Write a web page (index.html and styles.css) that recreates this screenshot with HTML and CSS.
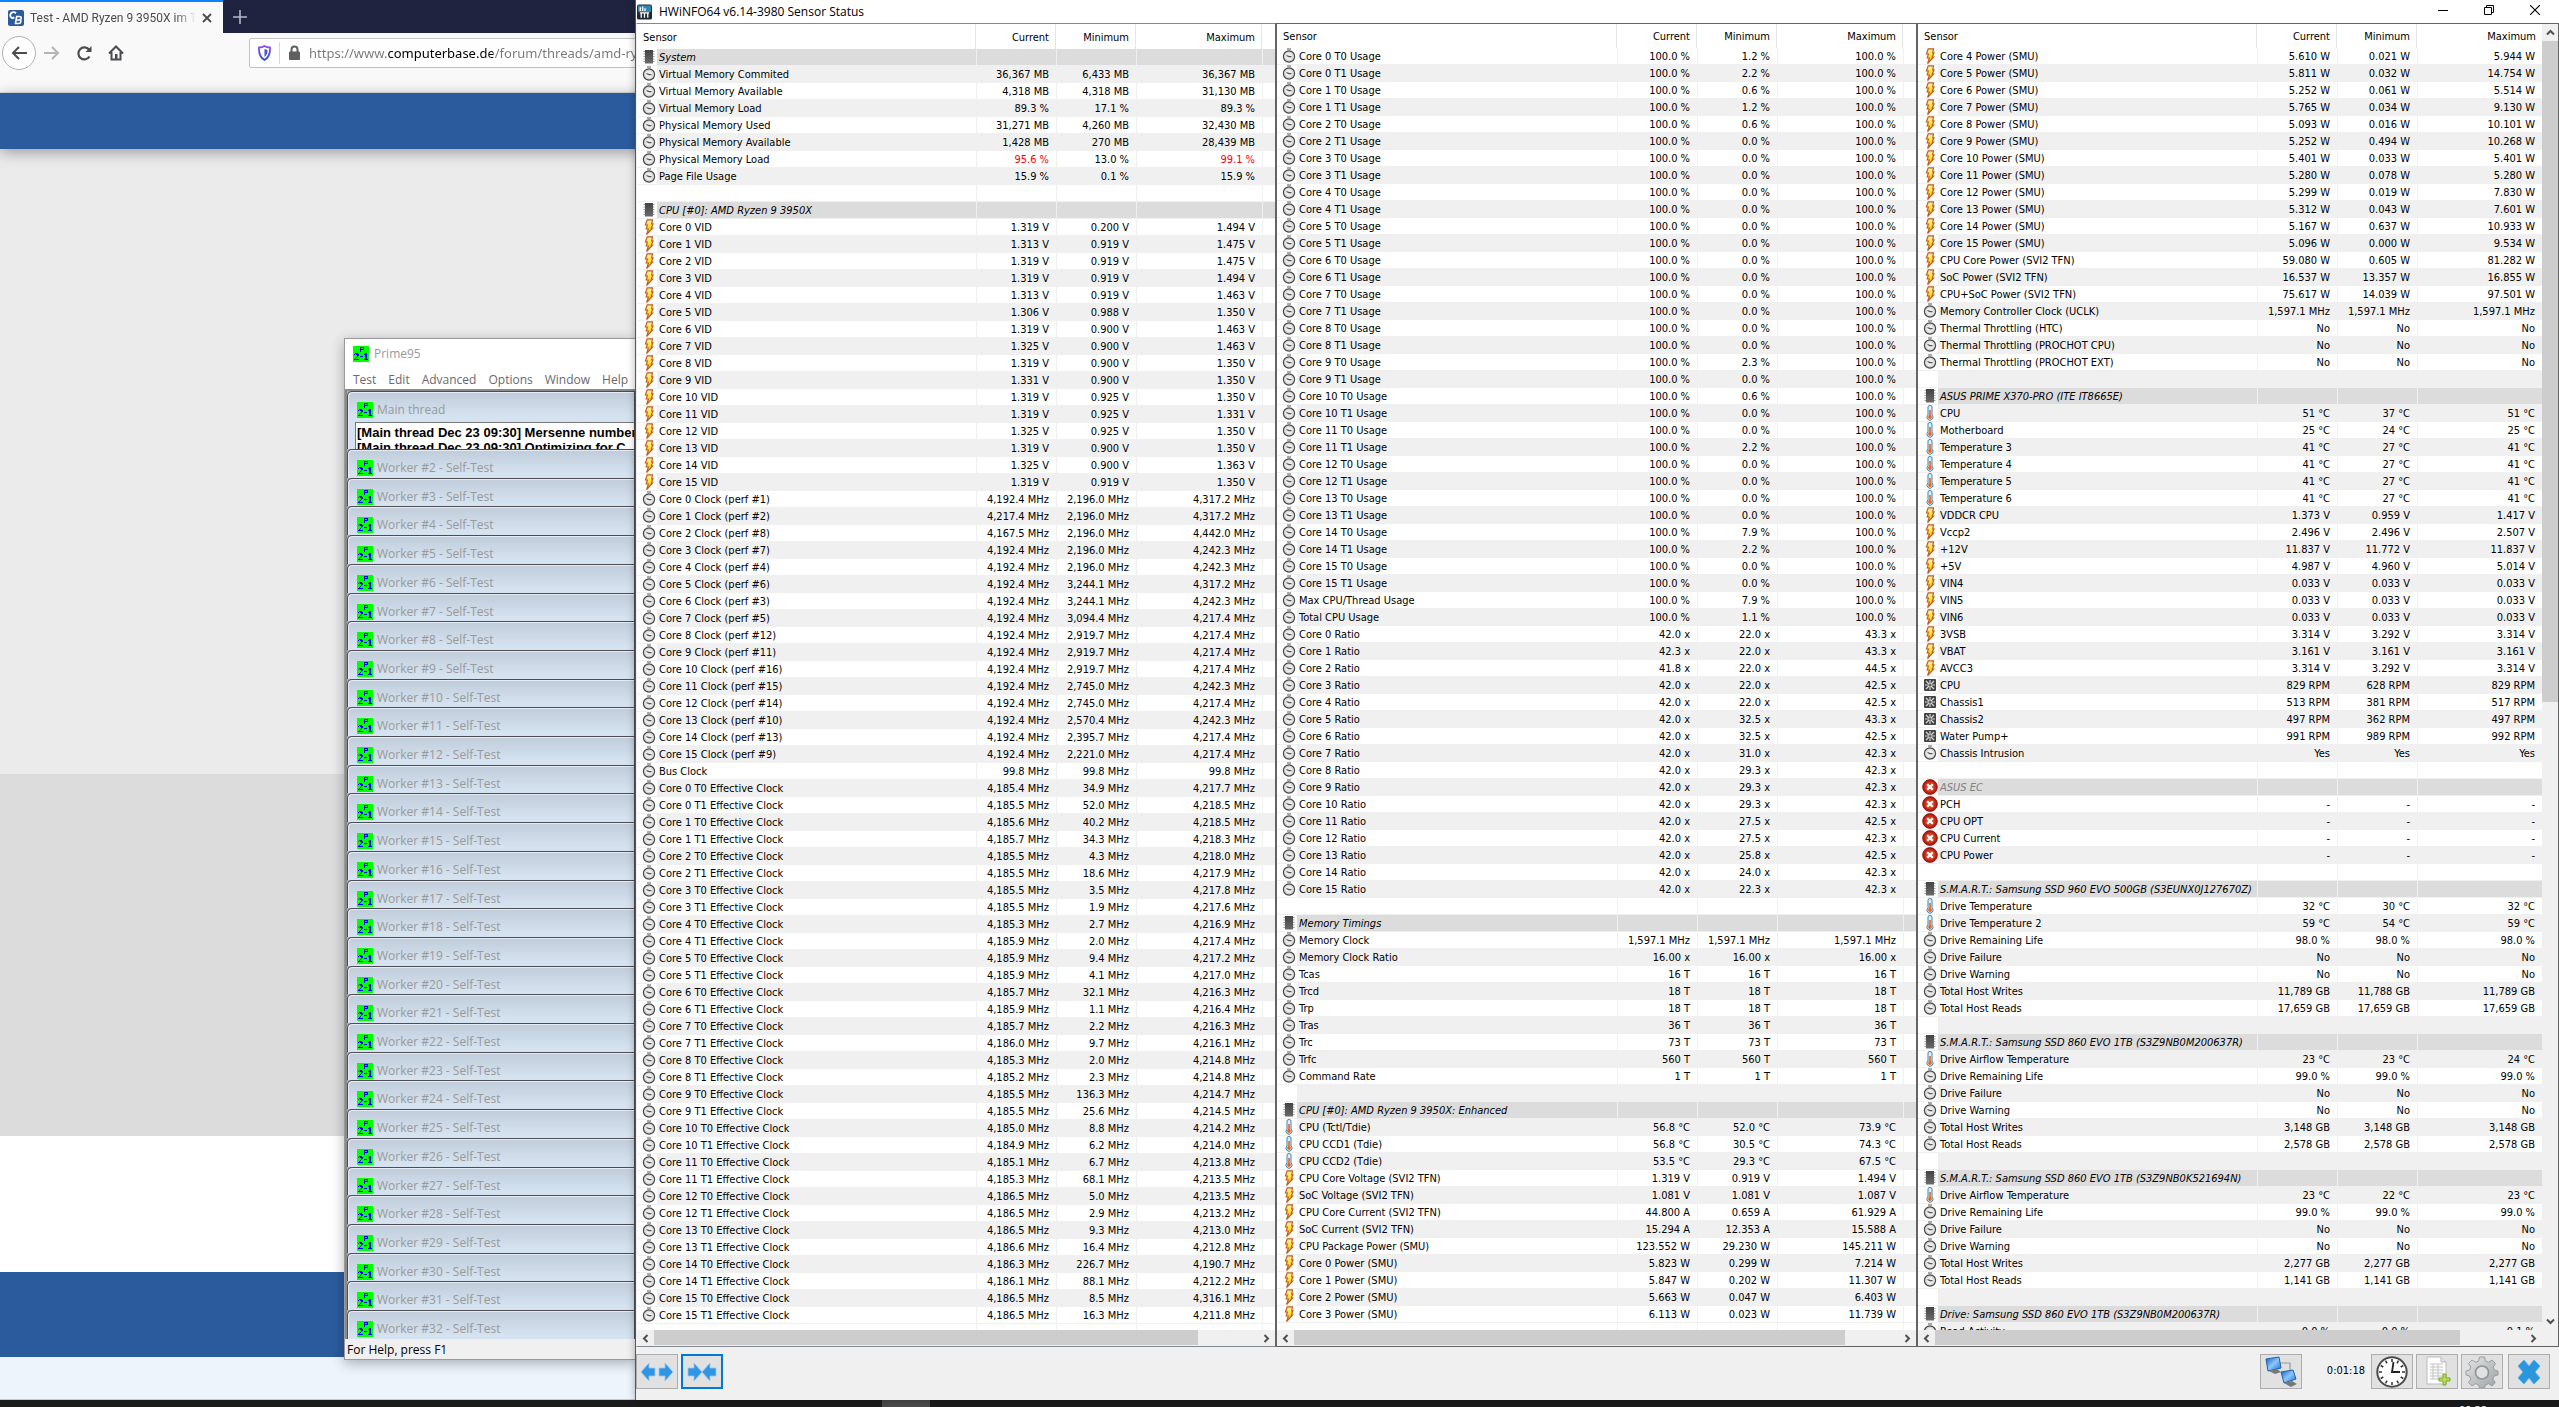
FILE: index.html
```html
<!DOCTYPE html>
<html lang="en">
<head>
<meta charset="utf-8">
<title>Sensor Status</title>
<link rel="stylesheet" href="styles.css">
</head>
<body>
<svg class="sprite" aria-hidden="true">
  <defs>
    <linearGradient id="g-bolt" x1="0" y1="0" x2="0" y2="1"><stop offset="0" stop-color="#fff0c0"/><stop offset=".5" stop-color="#ffe01e"/><stop offset="1" stop-color="#ffc800"/></linearGradient>
    <linearGradient id="g-chip" x1="0" y1="0" x2="0" y2="1"><stop offset="0" stop-color="#444"/><stop offset="1" stop-color="#6a6a6a"/></linearGradient>
    <linearGradient id="g-blue" x1="0" y1="0" x2="1" y2="1"><stop offset="0" stop-color="#0d5cc0"/><stop offset=".5" stop-color="#8fc6f7"/><stop offset="1" stop-color="#0b6fd6"/></linearGradient>
    <radialGradient id="g-red"><stop offset="0" stop-color="#f2703c"/><stop offset=".6" stop-color="#cf3a1c"/><stop offset="1" stop-color="#a50d0d"/></radialGradient>
    <linearGradient id="g-gear" x1="0" y1="0" x2="1" y2="1"><stop offset="0" stop-color="#e4e7e8"/><stop offset="1" stop-color="#9ca1a3"/></linearGradient>
    <linearGradient id="g-shield" x1="0" y1="0" x2="0" y2="1"><stop offset="0" stop-color="#8b4ff0"/><stop offset="1" stop-color="#2a4fd8"/></linearGradient>
  </defs>
  <symbol id="clock" viewBox="0 0 16 16"><rect x="6" y="0" width="4" height="2" fill="#aaa"/><circle cx="8" cy="8.500" r="5.500" fill="#ececec" stroke="#4c4c4c" stroke-width="1.400"/><circle cx="8" cy="8.500" r="4.300" fill="none" stroke="#cfcfcf"/><path d="M5.500 7.600L8 8.600H10.500" fill="none" stroke="#555" stroke-width="1.100"/></symbol>
  <symbol id="bolt" viewBox="0 0 16 16"><path d="M6.200 .8H11.500L10.700 4.800H12L10.300 9H11.600L5.600 15.500L7.400 10H5.200L6.400 6H4.400Z" fill="url(#g-bolt)" stroke="#c05f20" stroke-width="1.200"/></symbol>
  <symbol id="chip" viewBox="0 0 16 16"><path d="M2.500 2.500h11M2.500 5h11M2.500 7.500h11M2.500 10h11M2.500 12.500h11" stroke="#9a9a9a" stroke-width="1.200"/><rect x="4" y="1" width="8" height="13.500" fill="url(#g-chip)"/></symbol>
  <symbol id="temp" viewBox="0 0 16 16"><path d="M6 2a2 1.500 0 0 1 4 0V10a3 3 0 1 1-4 0Z" fill="#dff0fb" stroke="#3f83b0"/><path d="M8 5v7" stroke="#e8641b" stroke-width="1.600"/><circle cx="8" cy="12" r="1.900" fill="#f06418"/></symbol>
  <symbol id="fan" viewBox="0 0 16 16"><rect x="2" y="2" width="12" height="12" rx="1" fill="#444"/><path d="M8 3v10M3 8h10M4 4l8 8M12 4l-8 8" stroke="#d8d8d8" stroke-width="1.200"/><circle cx="8" cy="8" r="1.500" fill="#666"/></symbol>
  <symbol id="off" viewBox="0 0 16 16"><circle cx="8" cy="8" r="7.400" fill="url(#g-red)" stroke="#8e1111" stroke-width=".8"/><path d="M5.200 5.200l5.600 5.600M10.800 5.200l-5.600 5.600" stroke="#fff" stroke-width="2.200"/></symbol>
  <symbol id="prime" viewBox="0 0 16 16" shape-rendering="crispEdges"><rect width="16" height="16" fill="#0f0"/><path d="M7 1h4v3H8v2H7zM8 2v1h2V2zM2 7h3v1h1v2H5v1H4v1H3v1h3v1H1v-1h1v-1h1v-1h1V9H3V8H2v1H1V8h1zM7 10h3v1H7zM12 7h2v6h1v1h-4v-1h1V9h-1V8h1z" fill="#00f" fill-rule="evenodd"/></symbol>
</svg>

<div class="desktop">
  <section class="browser" aria-label="Browser">
    <header class="tabs">
      <div class="tab">
        <svg class="favicon" viewBox="0 0 16 16"><rect width="16" height="16" rx="2" fill="#2b5b9d"/><path d="M8 3.200C5.500 1 2.300 2.500 2.200 5.200C2.200 8 4.800 8.600 6.300 7.300" fill="none" stroke="#fff" stroke-width="1.900"/><path d="M8.700 6.500L7.500 13.500H10.500C13.500 13.500 13.500 10.300 11.500 10C14 9.600 13.800 6.500 11.500 6.500ZM9 10H11.500" fill="none" stroke="#fff" stroke-width="1.600"/></svg>
        <span class="tab-title">Test - AMD Ryzen 9 3950X im Te</span>
        <button class="icon-btn" aria-label="Close tab"><svg width="10" height="10" viewBox="0 0 10 10"><path d="M1 1l8 8M9 1l-8 8" stroke="#4a4a4c" stroke-width="1.800"/></svg></button>
      </div>
      <button class="icon-btn new-tab" aria-label="New tab"><svg width="14" height="14" viewBox="0 0 14 14"><path d="M7 0v14M0 7h14" stroke="#b7b7c3" stroke-width="1.600"/></svg></button>
    </header>
    <nav class="toolbar">
      <button class="icon-btn back" aria-label="Back"><svg width="16" height="16" viewBox="0 0 16 16"><path d="M16 8H2M8 2L2 8l6 6" fill="none" stroke="#4c4c4f" stroke-width="2"/></svg></button>
      <button class="icon-btn" aria-label="Forward"><svg width="16" height="16" viewBox="0 0 16 16"><path d="M0 8h14M8 2l6 6-6 6" fill="none" stroke="#b4b4b6" stroke-width="2"/></svg></button>
      <button class="icon-btn" aria-label="Reload"><svg width="16" height="16" viewBox="0 0 16 16"><path d="M13.500 11.500A6 6 0 1 1 13 4.500" fill="none" stroke="#4c4c4f" stroke-width="2.200"/><path d="M15.500 1v6h-6z" fill="#4c4c4f"/></svg></button>
      <button class="icon-btn" aria-label="Home"><svg width="16" height="16" viewBox="0 0 16 16"><path d="M1 8.500L8 1.500l7 7M3.500 7v7.500h9V7" fill="none" stroke="#4c4c4f" stroke-width="2"/><path d="M7 9h2.500v5H7z" fill="#4c4c4f"/></svg></button>
      <div class="urlbar">
        <svg width="13" height="16" viewBox="0 0 13 16"><path d="M1 2.500C3 2.500 5 2 6.500 1C8 2 10 2.500 12 2.500C12.300 8 11 12.500 6.500 15C2 12.500.7 8 1 2.500Z" fill="none" stroke="url(#g-shield)" stroke-width="1.800"/><path d="M6.500 4c1 .5 2 .8 3 .9C9.500 8 8.500 10.500 6.500 12Z" fill="#4a4fe0"/></svg>
        <span class="sep"></span>
        <svg width="13" height="16" viewBox="0 0 13 16"><path d="M3.500 7V4.500a3 3 0 0 1 6 0V7" fill="none" stroke="#5f5f61" stroke-width="2"/><rect x="1" y="6.500" width="11" height="8.500" rx="1" fill="#5f5f61"/></svg>
        <input class="url" type="text" aria-label="Address" value="https://www.computerbase.de/forum/threads/amd-ry">
      </div>
    </nav>
    <main class="site">
      <div class="site-top"></div>
      <div class="site-body"></div>
      <div class="site-mid"></div>
      <div class="site-white"></div>
      <div class="site-blue"></div>
      <div class="site-foot"></div>
    </main>
  </section>

  <section class="prime" aria-label="Prime95">
    <header class="prime-title"><svg class="ico"><use href="#prime"/></svg><span>Prime95</span></header>
    <nav class="menu">
      <button>Test</button><button>Edit</button><button>Advanced</button><button>Options</button><button>Window</button><button>Help</button>
    </nav>
    <div class="mdi">
      <article class="child main-thread">
        <header><svg class="ico"><use href="#prime"/></svg><span>Main thread</span></header>
        <div class="log">[Main thread Dec 23 09:30] Mersenne number<br>[Main thread Dec 23 09:30] Optimizing for C</div>
      </article>
      <div class="workers" id="workers"></div>
    </div>
    <footer class="status">For Help, press F1</footer>
  </section>

  <section class="hwinfo" aria-label="Sensor Status">
    <header class="hw-title">
      <svg class="hw-logo" viewBox="0 0 16 16"><rect width="16" height="16" rx="2" fill="#1c2833"/><rect x="1" y="1" width="14" height="7" fill="#2f86b5"/><path d="M3.500 3v4M6 2v5M8.500 4v3M4.500 9v5M8 9v5M11.500 9v5M3 9h10" stroke="#fff" stroke-width="1.400"/></svg>
      <h1>HWiNFO64 v6.14-3980 Sensor Status</h1>
      <div class="caption">
        <button class="icon-btn" aria-label="Minimize"><svg width="10" height="10" viewBox="0 0 10 10"><path d="M0 5.500h10" stroke="#000"/></svg></button>
        <button class="icon-btn" aria-label="Restore"><svg width="10" height="10" viewBox="0 0 10 10"><path d="M.5 2.500h7v7h-7zM2.500 2.500v-2h7v7h-2" fill="none" stroke="#000"/></svg></button>
        <button class="icon-btn" aria-label="Close"><svg width="10" height="10" viewBox="0 0 10 10"><path d="M0 0l10 10M10 0L0 10" stroke="#000" stroke-width="1.100"/></svg></button>
      </div>
    </header>
    <div class="panels" id="panels"></div>
    <footer class="tools">
      <button class="tool" aria-label="Expand"><svg width="34" height="22" viewBox="0 0 34 22"><path d="M1 11l8-9v5h6v8H9v5zM33 11l-8-9v5h-6v8h6v5z" fill="#2f95e6" stroke="#9cc7ea" stroke-width=".8"/></svg></button>
      <button class="tool active" aria-label="Shrink"><svg width="32" height="22" viewBox="0 0 32 22"><path d="M16 11L8 2v5H2v8h6v5zM16 11l8-9v5h6v8h-6v5z" fill="#2f95e6" stroke="#9cc7ea" stroke-width=".8"/></svg></button>
      <span class="spring"></span>
      <button class="tool" aria-label="Network"><svg width="34" height="32" viewBox="0 0 34 32"><path d="M16 7h10v8" fill="none" stroke="#999" stroke-width="1.200"/><path d="M2 3l13-2 2 11-13 3z" fill="url(#g-blue)" stroke="#1c62b0"/><path d="M5 15l6 3 6-2-4-3z" fill="#777"/><path d="M17 16l12-2 3 9-12 4z" fill="url(#g-blue)" stroke="#1c62b0"/><path d="M20 27l7 4 6-3-5-3z" fill="#777"/></svg></button>
      <span class="uptime">0:01:18</span>
      <button class="tool" aria-label="Clock"><svg width="34" height="32" viewBox="0 0 34 32"><circle cx="17" cy="16" r="14.700" fill="#fff" stroke="#4a4a4a" stroke-width="2"/><path d="M17 3v3M17 26v3M4 16h3M27 16h3M10.500 4.700l1.500 2.600M22 24.700l1.500 2.600M5.700 9.500l2.600 1.500M25.700 21l2.600 1.500M5.700 22.500l2.600-1.500M25.700 11l2.600-1.500M10.500 27.300l1.500-2.600M22 7.300l1.500-2.600" stroke="#333" stroke-width="1.500"/><path d="M18.500 6L17 16h8" fill="none" stroke="#222" stroke-width="1.800"/></svg></button>
      <button class="tool" aria-label="Report"><svg width="34" height="32" viewBox="0 0 34 32"><path d="M7 1h14l5 5v22H7z" fill="#fcfcfc" stroke="#bbb"/><path d="M21 1v5h5" fill="#e6e6e6" stroke="#bbb"/><path d="M10 8h13M10 11h13M10 14h13M10 17h13M10 20h13M10 23h13M13 8v15M18 8v15" stroke="#c4c4c4"/><path d="M23 18h3v4h4v3h-4v4h-3v-4h-4v-3h4z" fill="#b5dc5a" stroke="#7da52a"/></svg></button>
      <button class="tool" aria-label="Settings"><svg width="34" height="32" viewBox="0 0 34 32"><path d="M14.500 1h5l1 4 3 1.300L27 4l3.500 3.500-2.300 3.600 1.300 3L33 15v4l-3.800 1-1.200 3 2.200 3.500L27 30l-3.500-2.300-3 1.300-1 3h-5l-1-3-3-1.300L7 30l-3.500-3.500L5.800 23l-1.300-3L1 19v-4l3.600-1 1.200-3-2.300-3.500L7 4l3.500 2.300 3-1.300z" fill="url(#g-gear)" stroke="#9a9d9e"/><circle cx="17" cy="16.500" r="6.500" fill="#e1e1e1" stroke="#8f9394" stroke-width="1.600"/></svg></button>
      <button class="tool" aria-label="Close sensors"><svg width="24" height="26" viewBox="0 0 24 26"><path d="M7 1l5 6 5-6 6 6-5 6 5 6-6 6-5-6-5 6-6-6 5-6-5-6z" fill="#2b96dc" stroke="#58b2ea"/></svg></button>
    </footer>
  </section>

  <footer class="taskbar"><span class="running"></span><time class="time">09:32</time></footer>
</div>
<script src="script.js"></script>
</body>
</html>
```
FILE: styles.css
```css
* { box-sizing: border-box; }
body { margin: 0; font: 12px/16px "Open Sans", "Noto Sans", sans-serif; color: #000; }
button, input { font: inherit; color: inherit; border: 0; margin: 0; padding: 0; background: none; }
svg { display: block; flex: none; }
.sprite { position: absolute; width: 0; height: 0; }
.ico { width: 16px; height: 16px; }
.icon-btn { display: flex; align-items: center; justify-content: center; }

.desktop { position: relative; height: 100vh; overflow: hidden; display: flex; flex-direction: column; }

/* browser */
.browser { flex: 1; min-height: 0; display: flex; flex-direction: column; }
.tabs { height: 33px; flex: none; display: flex; background: #20233f; }
.tab { width: 223px; display: flex; align-items: center; gap: 6px; padding: 0 11px 0 8px; background: #f9f9fa; border-top: 2px solid #0a84ff; color: #4c4c50; }
.favicon { width: 16px; height: 16px; }
.tab-title { flex: 1; overflow: hidden; font-family: Roboto, "Open Sans", sans-serif; white-space: nowrap; -webkit-mask-image: linear-gradient(90deg, #000 88%, transparent); mask-image: linear-gradient(90deg, #000 88%, transparent); }
.new-tab { width: 34px; }
.toolbar { height: 60px; flex: none; display: flex; align-items: center; gap: 16px; padding: 0 0 19px 2px; background: #f9f9fa; border-bottom: 1px solid #e0e0e1; }
.back { width: 34px; height: 34px; border: 1px solid #b1b1b3; border-radius: 50%; background: #fff; margin-right: -8px; }
.urlbar { flex: 1; height: 30px; margin-left: 109px; display: flex; align-items: center; gap: 8px; padding-left: 8px; background: #fff; border: 1px solid #c3c3c5; border-radius: 2px; }
.sep { width: 1px; height: 22px; background: #d7d7db; }
.url { flex: 1; font: 13px/20px "Noto Sans", "Open Sans", sans-serif; color: transparent; background: linear-gradient(90deg, #777 78px, #000 78px 184px, #777 184px); -webkit-background-clip: text; background-clip: text; }
.site { flex: 1; min-height: 0; display: flex; flex-direction: column; background: #ebebeb; }
.site-top { flex: 0 0 56px; background: #2b5b9d; box-shadow: 0 3px 14px rgba(0,0,0,.35); }
.site-body { flex: 1; }
.site-mid { flex: 0 0 362px; background: #dcdcdc; }
.site-white { flex: 0 0 136px; background: #fff; }
.site-blue { flex: 0 0 85px; background: #2b5b9d; }
.site-foot { flex: 0 0 43px; background: #edf4fc; border-bottom: 1px solid #c8c8c8; }

/* Prime95 */
.prime { position: absolute; left: 344px; top: 338px; bottom: 47px; width: 292px; display: flex; flex-direction: column; overflow: hidden; background: #fff; border: 1px solid #999; box-shadow: 0 3px 12px rgba(0,0,0,.3); color: #999; }
.prime-title { display: flex; align-items: center; gap: 5px; padding: 6px 8px; height: 30px; }
.menu { display: flex; gap: 12px; padding: 2px 8px 0; height: 20px; color: #6a6a6a; }
.mdi { flex: 1; min-height: 0; overflow: hidden; display: flex; flex-direction: column; background: #ababab; border-top: 2px solid #8a8a8a; border-left: 2px solid #8a8a8a; }
.child { background: linear-gradient(#c0ccda, #d5e2ef 24px); border: 1px solid #4e4e52; border-top-left-radius: 5px; box-shadow: inset 1px 1px #e4ecf5; overflow: hidden; }
.child header { display: flex; align-items: center; gap: 4px; padding: 10px 9px 4px; }
.child header span { white-space: nowrap; }
.main-thread { flex: 0 0 58px; border-bottom: 0; }
.log { margin-left: 7px; padding: 2px 0 0 1px; border-top: 1px solid #777; border-left: 1px solid #777; background: #fff; color: #000; font: bold 13px/15px "Liberation Sans", sans-serif; white-space: nowrap; overflow: hidden; }
.workers { flex: 1; min-height: 0; display: flex; flex-direction: column; }
.workers .child { flex: 1; min-height: 0; border-bottom: 0; }
.status { flex: none; height: 20px; padding: 3px 2px 0; background: #f0f0f0; color: #000; }

/* HWiNFO */
.hwinfo { position: absolute; left: 635px; right: 0; top: 0; bottom: 7px; display: flex; flex-direction: column; background: #f0f0f0; border-left: 1px solid #55565c; box-shadow: 0 0 8px rgba(0,0,0,.3); }
.hw-title { flex: none; height: 23px; display: flex; align-items: center; gap: 7px; padding-left: 1px; background: #fff; }
.hw-logo { width: 15px; height: 16px; }
.hw-title h1 { flex: 1; margin: 0; font-size: 12px; font-weight: 400; }
.caption { display: flex; align-self: flex-start; padding: 5px 19px 0 0; gap: 36px; }
.panels { flex: 1; min-height: 0; display: grid; grid-template-columns: 640fr 641fr 642fr; grid-template-rows: 100%; font: 11px/14px "DejaVu Sans Condensed", "Liberation Sans", sans-serif; }
.panel { min-width: 0; display: flex; background: #fff; border: 1px solid #646468; }
.panel:first-child { border-color: #828790 #646468 #828790 #f0f0f0; }
.view { flex: 1; min-width: 0; display: flex; flex-direction: column; }
.clip { flex: 1; min-height: 0; overflow: hidden; }
.sensors { width: 100%; table-layout: fixed; border-collapse: separate; border-spacing: 0; }
.c-val { width: 80px; }
.c-max { width: 126px; }
.c-pad { width: 13px; }
.panel:last-child .c-max { width: 125px; }
.sensors th { font-weight: 400; text-align: right; }
.sensors td, .sensors th { padding: 2px 7px 0 0; white-space: nowrap; overflow: hidden; height: 17px; }
.sensors thead th { height: 24px; border-right: 1px solid #e5e5e5; padding-right: 6px; }
.panel:first-child thead th { height: 25px; }
.sensors thead th:first-child { text-align: left; padding-left: 6px; }
.sensors thead th:last-child { border-right: 0; }
.sensors td { text-align: right; border-left: 1px solid #f0f0f0; border-bottom: 1px solid #f0f0f0; }
.sensors tbody th { text-align: left; border-bottom: 1px solid #f0f0f0; padding: 0; }
.sensors tbody tr:nth-child(even) { background: #f0f0f0; }
.sensors tbody tr.group { background: #dcdcdc; font-style: italic; }
.sensors tbody tr.tail { background: #fff; }
.cell { display: flex; height: 16px; }
.cell i { width: 20px; padding-left: 6px; flex: none; background: #fff; }
.cell svg { width: 16px; height: 16px; margin-left: -2px; }
.cell span { padding: 2px 0 0 2px; }
.hot { color: #f00; }
.gone span { color: #808080; }

/* scroll bars */
.hbar { flex: none; height: 16px; display: flex; background: #f0f0f0; }
.hbar button { flex: none; width: 17px; height: 16px; display: flex; align-items: center; justify-content: center; }
.track { flex: 1; }
.thumb { height: 15px; background: #cdcdcd; }
.vbar { flex: none; width: 16px; display: flex; flex-direction: column; background: #f0f0f0; padding-bottom: 16px; }
.vbar button { flex: none; width: 16px; height: 17px; display: flex; align-items: center; justify-content: center; }
.vbar .thumb { height: 52%; }

.tools { flex: none; height: 53px; display: flex; align-items: flex-start; padding: 7px 9px 0 0; }
.tool { width: 42px; height: 35px; display: flex; align-items: center; justify-content: center; background: #e1e1e1; border: 1px solid #adadad; margin-right: 3px; }
.tool.active { border: 2px solid #0078d7; }
.tool:last-child { margin: 0 0 0 2px; }
.spring { flex: 1; }
.uptime { width: 66px; padding: 9px 6px 0 0; text-align: right; font: 11px/16px "DejaVu Sans Condensed", "Liberation Sans", sans-serif; }

.taskbar { flex: none; height: 7px; overflow: hidden; display: flex; background: #1b1b1b; color: #fff; }
.running { width: 48px; margin-left: 882px; background: #4a4a4a; }
.time { margin-left: auto; margin-right: 72px; font: 11px/19px "Open Sans", sans-serif; }
```
FILE: script.js
```js
// Each panel is a list of lines: "icon|name|current|minimum|maximum".
// "# name" starts a sensor group; "" is a spacer row.
const pair = (list, name, unit) => list.map((v, i) => {
  const [cur, min, max] = v.split(' ');
  return `clock|Core ${i >> 1} T${i % 2} ${name}|${cur} ${unit}|${min} ${unit}|${max} ${unit}`;
});
const core = (icon, list, name, unit, from = 0) => list.map((v, i) => {
  const [cur, min, max] = v.split(' ');
  return `${icon}|Core ${i + from} ${name}|${cur} ${unit}|${min} ${unit}|${max} ${unit}`;
});

const perf = [1, 2, 8, 7, 4, 6, 3, 5, 12, 11, 16, 15, 14, 10, 13, 9];
const panel1 = [
  '# System',
  'clock|Virtual Memory Commited|36,367 MB|6,433 MB|36,367 MB',
  'clock|Virtual Memory Available|4,318 MB|4,318 MB|31,130 MB',
  'clock|Virtual Memory Load|89.3 %|17.1 %|89.3 %',
  'clock|Physical Memory Used|31,271 MB|4,260 MB|32,430 MB',
  'clock|Physical Memory Available|1,428 MB|270 MB|28,439 MB',
  'clock|Physical Memory Load|!95.6 %|13.0 %|!99.1 %',
  'clock|Page File Usage|15.9 %|0.1 %|15.9 %',
  '',
  '# CPU [#0]: AMD Ryzen 9 3950X',
  ...core('bolt', ['1.319 0.200 1.494', '1.313 0.919 1.475', '1.319 0.919 1.475', '1.319 0.919 1.494', '1.313 0.919 1.463', '1.306 0.988 1.350', '1.319 0.900 1.463', '1.325 0.900 1.463', '1.319 0.900 1.350', '1.331 0.900 1.350', '1.319 0.925 1.350', '1.319 0.925 1.331', '1.325 0.925 1.350', '1.319 0.900 1.350', '1.325 0.900 1.363', '1.319 0.919 1.350'], 'VID', 'V'),
  ...core('clock', ['4,192.4 2,196.0 4,317.2', '4,217.4 2,196.0 4,317.2', '4,167.5 2,196.0 4,442.0', '4,192.4 2,196.0 4,242.3', '4,192.4 2,196.0 4,242.3', '4,192.4 3,244.1 4,317.2', '4,192.4 3,244.1 4,242.3', '4,192.4 3,094.4 4,217.4', '4,192.4 2,919.7 4,217.4', '4,192.4 2,919.7 4,217.4', '4,192.4 2,919.7 4,217.4', '4,192.4 2,745.0 4,242.3', '4,192.4 2,745.0 4,217.4', '4,192.4 2,570.4 4,242.3', '4,192.4 2,395.7 4,217.4', '4,192.4 2,221.0 4,217.4'], 'Clock', 'MHz').map((l, i) => l.replace('Clock', `Clock (perf #${perf[i]})`)),
  'clock|Bus Clock|99.8 MHz|99.8 MHz|99.8 MHz',
  ...pair(['4,185.4 34.9 4,217.7', '4,185.5 52.0 4,218.5', '4,185.6 40.2 4,218.5', '4,185.7 34.3 4,218.3', '4,185.5 4.3 4,218.0', '4,185.5 18.6 4,217.9', '4,185.5 3.5 4,217.8', '4,185.5 1.9 4,217.6', '4,185.3 2.7 4,216.9', '4,185.9 2.0 4,217.4', '4,185.9 9.4 4,217.2', '4,185.9 4.1 4,217.0', '4,185.7 32.1 4,216.3', '4,185.9 1.1 4,216.4', '4,185.7 2.2 4,216.3', '4,186.0 9.7 4,216.1', '4,185.3 2.0 4,214.8', '4,185.2 2.3 4,214.8', '4,185.5 136.3 4,214.7', '4,185.5 25.6 4,214.5', '4,185.0 8.8 4,214.2', '4,184.9 6.2 4,214.0', '4,185.1 6.7 4,213.8', '4,185.3 68.1 4,213.5', '4,186.5 5.0 4,213.5', '4,186.5 2.9 4,213.2', '4,186.5 9.3 4,213.0', '4,186.6 16.4 4,212.8', '4,186.3 226.7 4,190.7', '4,186.1 88.1 4,212.2', '4,186.5 8.5 4,316.1', '4,186.5 16.3 4,211.8'], 'Effective Clock', 'MHz'),
  '~',
];

const usageMin = ['1.2', '2.2', '0.6', '1.2', '0.6', '0.0', '0.0', '0.0', '0.0', '0.0', '0.0', '0.0', '0.0', '0.0', '0.0', '0.0', '0.0', '0.0', '2.3', '0.0', '0.6', '0.0', '0.0', '2.2', '0.0', '0.0', '0.0', '0.0', '7.9', '2.2', '0.0', '0.0'];
const timing = (name, v) => `clock|${name}|${v}|${v}|${v}`;
const panel2 = [
  ...pair(usageMin.map(m => `100.0 ${m} 100.0`), 'Usage', '%'),
  'clock|Max CPU/Thread Usage|100.0 %|7.9 %|100.0 %',
  'clock|Total CPU Usage|100.0 %|1.1 %|100.0 %',
  ...core('clock', ['42.0 22.0 43.3', '42.3 22.0 43.3', '41.8 22.0 44.5', '42.0 22.0 42.5', '42.0 22.0 42.5', '42.0 32.5 43.3', '42.0 32.5 42.5', '42.0 31.0 42.3', '42.0 29.3 42.3', '42.0 29.3 42.3', '42.0 29.3 42.3', '42.0 27.5 42.5', '42.0 27.5 42.3', '42.0 25.8 42.5', '42.0 24.0 42.3', '42.0 22.3 42.3'], 'Ratio', 'x'),
  '',
  '# Memory Timings',
  timing('Memory Clock', '1,597.1 MHz'), timing('Memory Clock Ratio', '16.00 x'),
  timing('Tcas', '16 T'), timing('Trcd', '18 T'), timing('Trp', '18 T'), timing('Tras', '36 T'),
  timing('Trc', '73 T'), timing('Trfc', '560 T'), timing('Command Rate', '1 T'),
  '',
  '# CPU [#0]: AMD Ryzen 9 3950X: Enhanced',
  'temp|CPU (Tctl/Tdie)|56.8 °C|52.0 °C|73.9 °C',
  'temp|CPU CCD1 (Tdie)|56.8 °C|30.5 °C|74.3 °C',
  'temp|CPU CCD2 (Tdie)|53.5 °C|29.3 °C|67.5 °C',
  'bolt|CPU Core Voltage (SVI2 TFN)|1.319 V|0.919 V|1.494 V',
  'bolt|SoC Voltage (SVI2 TFN)|1.081 V|1.081 V|1.087 V',
  'bolt|CPU Core Current (SVI2 TFN)|44.800 A|0.659 A|61.929 A',
  'bolt|SoC Current (SVI2 TFN)|15.294 A|12.353 A|15.588 A',
  'bolt|CPU Package Power (SMU)|123.552 W|29.230 W|145.211 W',
  ...core('bolt', ['5.823 0.299 7.214', '5.847 0.202 11.307', '5.663 0.047 6.403', '6.113 0.023 11.739'], 'Power (SMU)', 'W'),
  '~',
];

const panel3 = [
  ...core('bolt', ['5.610 0.021 5.944', '5.811 0.032 14.754', '5.252 0.061 5.514', '5.765 0.034 9.130', '5.093 0.016 10.101', '5.252 0.494 10.268', '5.401 0.033 5.401', '5.280 0.078 5.280', '5.299 0.019 7.830', '5.312 0.043 7.601', '5.167 0.637 10.933', '5.096 0.000 9.534'], 'Power (SMU)', 'W', 4),
  'bolt|CPU Core Power (SVI2 TFN)|59.080 W|0.605 W|81.282 W',
  'bolt|SoC Power (SVI2 TFN)|16.537 W|13.357 W|16.855 W',
  'bolt|CPU+SoC Power (SVI2 TFN)|75.617 W|14.039 W|97.501 W',
  timing('Memory Controller Clock (UCLK)', '1,597.1 MHz'),
  timing('Thermal Throttling (HTC)', 'No'),
  timing('Thermal Throttling (PROCHOT CPU)', 'No'),
  timing('Thermal Throttling (PROCHOT EXT)', 'No'),
  '',
  '# ASUS PRIME X370-PRO (ITE IT8665E)',
  'temp|CPU|51 °C|37 °C|51 °C',
  'temp|Motherboard|25 °C|24 °C|25 °C',
  ...[3, 4, 5, 6].map(n => `temp|Temperature ${n}|41 °C|27 °C|41 °C`),
  'bolt|VDDCR CPU|1.373 V|0.959 V|1.417 V',
  'bolt|Vccp2|2.496 V|2.496 V|2.507 V',
  'bolt|+12V|11.837 V|11.772 V|11.837 V',
  'bolt|+5V|4.987 V|4.960 V|5.014 V',
  ...[4, 5, 6].map(n => `bolt|VIN${n}|0.033 V|0.033 V|0.033 V`),
  'bolt|3VSB|3.314 V|3.292 V|3.314 V',
  'bolt|VBAT|3.161 V|3.161 V|3.161 V',
  'bolt|AVCC3|3.314 V|3.292 V|3.314 V',
  'fan|CPU|829 RPM|628 RPM|829 RPM',
  'fan|Chassis1|513 RPM|381 RPM|517 RPM',
  'fan|Chassis2|497 RPM|362 RPM|497 RPM',
  'fan|Water Pump+|991 RPM|989 RPM|992 RPM',
  timing('Chassis Intrusion', 'Yes'),
  '',
  '#- ASUS EC',
  ...['PCH', 'CPU OPT', 'CPU Current', 'CPU Power'].map(n => `off|${n}|-|-|-`),
  '',
  '# S.M.A.R.T.: Samsung SSD 960 EVO 500GB (S3EUNX0J127670Z)',
  'temp|Drive Temperature|32 °C|30 °C|32 °C',
  'temp|Drive Temperature 2|59 °C|54 °C|59 °C',
  timing('Drive Remaining Life', '98.0 %'), timing('Drive Failure', 'No'), timing('Drive Warning', 'No'),
  'clock|Total Host Writes|11,789 GB|11,788 GB|11,789 GB',
  timing('Total Host Reads', '17,659 GB'),
  '',
  '# S.M.A.R.T.: Samsung SSD 860 EVO 1TB (S3Z9NB0M200637R)',
  'temp|Drive Airflow Temperature|23 °C|23 °C|24 °C',
  timing('Drive Remaining Life', '99.0 %'), timing('Drive Failure', 'No'), timing('Drive Warning', 'No'),
  timing('Total Host Writes', '3,148 GB'), timing('Total Host Reads', '2,578 GB'),
  '',
  '# S.M.A.R.T.: Samsung SSD 860 EVO 1TB (S3Z9NB0K521694N)',
  'temp|Drive Airflow Temperature|23 °C|22 °C|23 °C',
  timing('Drive Remaining Life', '99.0 %'), timing('Drive Failure', 'No'), timing('Drive Warning', 'No'),
  timing('Total Host Writes', '2,277 GB'), timing('Total Host Reads', '1,141 GB'),
  '',
  '# Drive: Samsung SSD 860 EVO 1TB (S3Z9NB0M200637R)',
  'clock|Read Activity|0.0 %|0.0 %|0.1 %',
];

function row(line, pad) {
  const end = pad ? '<td></td>' : '';
  const blank = '<td></td><td></td><td></td>' + end;
  const name = (icon, text) => `<th scope="row"><div class="cell"><i>${icon ? `<svg><use href="#${icon}"/></svg>` : ''}</i><span>${text}</span></div></th>`;
  if (line === '') return `<tr>${name('', '')}${blank}</tr>`;
  if (line === '~') return `<tr class="tail">${name('', '')}${blank}</tr>`;
  if (line.startsWith('#- ')) return `<tr class="group gone">${name('off', line.slice(3))}${blank}</tr>`;
  if (line.startsWith('# ')) return `<tr class="group">${name('chip', line.slice(2))}${blank}</tr>`;
  const [icon, text, ...vals] = line.split('|');
  const cells = vals.map(v => v[0] === '!' ? `<td class="hot">${v.slice(1)}</td>` : `<td>${v}</td>`).join('');
  return `<tr>${name(icon, text)}${cells}${end}</tr>`;
}

const arrow = d => `<svg width="9" height="9" viewBox="0 0 9 9"><path d="${d}" fill="none" stroke="#505050" stroke-width="2"/></svg>`;

function panel(lines, pad, thumb) {
  return `<div class="panel"><div class="view"><div class="clip"><table class="sensors">
    <colgroup><col><col class="c-val"><col class="c-val"><col class="c-max">${pad ? '<col class="c-pad">' : ''}</colgroup>
    <thead><tr><th>Sensor</th><th>Current</th><th>Minimum</th><th>Maximum</th>${pad ? '<th></th>' : ''}</tr></thead>
    <tbody>${lines.map(l => row(l, pad)).join('')}</tbody></table></div>
    <div class="hbar"><button aria-label="Scroll left">${arrow('M6.500 1L3 4.500 6.500 8')}</button><div class="track"><div class="thumb" style="width:${thumb}%"></div></div><button aria-label="Scroll right">${arrow('M2.500 1L6 4.500 2.500 8')}</button></div></div>
    ${pad ? '' : `<div class="vbar"><button aria-label="Scroll up">${arrow('M1 6.500L4.500 3 8 6.500')}</button><div class="track"><div class="thumb"></div></div><button aria-label="Scroll down">${arrow('M1 2.500L4.500 6 8 2.500')}</button></div>`}</div>`;
}

document.getElementById('panels').innerHTML =
  panel(panel1, true, 90) + panel(panel2, true, 91) + panel(panel3, false, 89);

document.getElementById('workers').innerHTML = Array.from({ length: 31 }, (_, i) =>
  `<article class="child"><header><svg class="ico"><use href="#prime"/></svg><span>Worker #${i + 2} - Self-Test</span></header></article>`).join('');
```
